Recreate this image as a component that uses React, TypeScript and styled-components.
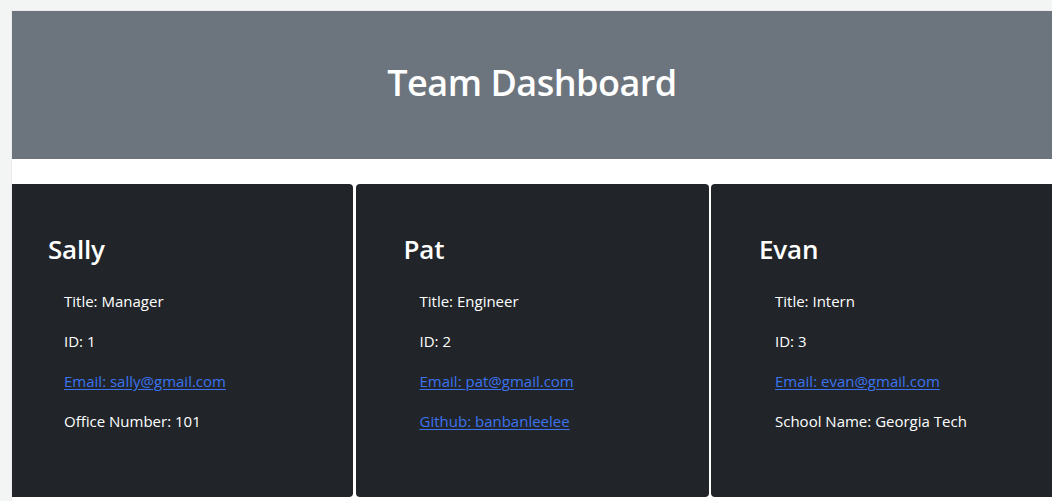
import React from "react";
import styled, { createGlobalStyle } from "styled-components";

const GlobalStyle = createGlobalStyle`
  html, body { margin: 0; padding: 0; }
  body {
    background: #f3f4f4;
    font-family: "Open Sans", "Noto Sans", Arial, sans-serif;
    overflow: hidden;
  }
`;

const Frame = styled.div`
  padding: 10px 0 0 11px;
  height: 501px;
  box-sizing: border-box;
`;

const Viewport = styled.div`
  background: #ffffff;
  height: 100%;
  overflow: hidden;
  border-top: 1px solid #ececec;
  border-left: 1px solid #ececec;
  box-sizing: border-box;
`;

const Content = styled.div`
  width: 1064px;
  margin-left: -12px;
  margin-top: -1px;
`;

const Header = styled.header`
  background: #6c757d;
  height: 149px;
  display: flex;
  align-items: center;
  justify-content: center;
`;

const Heading = styled.h1`
  margin: 0 0 4px;
  color: #ffffff;
  font-size: 36px;
  font-weight: 600;
  letter-spacing: -0.5px;
`;

const CardRow = styled.main`
  display: grid;
  grid-template-columns: repeat(3, 1fr);
  gap: 2.5px;
  margin-top: 25px;
`;

const Card = styled.section`
  background: #212529;
  border-radius: 4px;
  height: 313px;
  box-sizing: border-box;
  padding: 48px 24px 0 48px;
  color: #ffffff;
`;

const Name = styled.h3`
  margin: 0 0 23px;
  font-size: 26px;
  font-weight: 600;
  line-height: 34px;
  letter-spacing: -0.2px;
`;

const Details = styled.div`
  padding-left: 16px;
`;

const Line = styled.p`
  margin: 0 0 16px;
  font-size: 15px;
  line-height: 24px;
`;

const Link = styled.a`
  color: #3b73f0;
  text-decoration: underline;
  text-underline-offset: 2px;
`;

type Member = {
  name: string;
  title: string;
  id: number;
  email: string;
  extra: { label: string; value: string; link?: boolean };
};

const team: Member[] = [
  { name: "Sally", title: "Manager", id: 1, email: "sally@gmail.com", extra: { label: "Office Number", value: "101" } },
  { name: "Pat", title: "Engineer", id: 2, email: "pat@gmail.com", extra: { label: "Github", value: "banbanleelee", link: true } },
  { name: "Evan", title: "Intern", id: 3, email: "evan@gmail.com", extra: { label: "School Name", value: "Georgia Tech" } },
];

export default function App() {
  return (
    <>
      <GlobalStyle />
      <Frame>
        <Viewport>
          <Content>
            <Header>
              <Heading>Team Dashboard</Heading>
            </Header>
            <CardRow>
              {team.map((m) => (
                <Card key={m.id}>
                  <Name>{m.name}</Name>
                  <Details>
                    <Line>Title: {m.title}</Line>
                    <Line>ID: {m.id}</Line>
                    <Line>
                      <Link href="#">Email: {m.email}</Link>
                    </Line>
                    <Line>
                      {m.extra.link ? (
                        <Link href="#">
                          {m.extra.label}: {m.extra.value}
                        </Link>
                      ) : (
                        <>
                          {m.extra.label}: {m.extra.value}
                        </>
                      )}
                    </Line>
                  </Details>
                </Card>
              ))}
            </CardRow>
          </Content>
        </Viewport>
      </Frame>
    </>
  );
}
